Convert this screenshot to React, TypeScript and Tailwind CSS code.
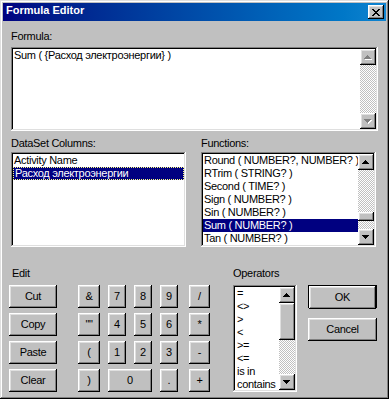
import React from "react";

// Win98 style bevels
const raised =
  "shadow-[inset_-1px_-1px_#000,inset_1px_1px_#fff,inset_-2px_-2px_#808080,inset_2px_2px_#dfdfdf]";
const sunken =
  "shadow-[inset_-1px_-1px_#fff,inset_1px_1px_#808080,inset_-2px_-2px_#dfdfdf,inset_2px_2px_#000]";
const checker =
  "bg-[repeating-conic-gradient(#c0c0c0_0%_25%,#ffffff_0%_50%)] bg-[length:2px_2px]";

function Arrow({ dir, disabled }: { dir: "up" | "down"; disabled?: boolean }) {
  const pts = dir === "up" ? "3.5,0 7,4 0,4" : "0,0 7,0 3.5,4";
  return (
    <div className={`w-[16px] h-[16px] shrink-0 bg-[#c0c0c0] flex items-center justify-center ${raised}`}>
      <svg width="8" height="5" viewBox="0 0 8 5" shapeRendering="crispEdges">
        {disabled && <polygon points={pts} fill="#fff" transform="translate(1,1)" />}
        <polygon points={pts} fill={disabled ? "#808080" : "#000"} />
      </svg>
    </div>
  );
}

function ScrollBar({ before, thumb, disabled }: { before?: number; thumb?: number; disabled?: boolean }) {
  return (
    <div className="w-[16px] shrink-0 flex flex-col">
      <Arrow dir="up" disabled={disabled} />
      {thumb ? (
        <>
          <div className={checker} style={{ height: before }} />
          <div className={`bg-[#c0c0c0] ${raised}`} style={{ height: thumb }} />
          <div className={`flex-1 ${checker}`} />
        </>
      ) : (
        <div className={`flex-1 ${checker}`} />
      )}
      <Arrow dir="down" disabled={disabled} />
    </div>
  );
}

function Btn({ label, className = "" }: { label: string; className?: string }) {
  return (
    <div className={`h-[23px] bg-[#c0c0c0] flex items-center justify-center ${raised} ${className}`}>
      {label}
    </div>
  );
}

const functions = [
  "Round ( NUMBER?, NUMBER? )",
  "RTrim ( STRING? )",
  "Second ( TIME? )",
  "Sign ( NUMBER? )",
  "Sin ( NUMBER? )",
  "Sum ( NUMBER? )",
  "Tan ( NUMBER? )",
];

const operators = ["=", "<>", ">", "<", ">=", "<=", "is in", "contains"];

export default function App() {
  return (
    <div className="w-[389px] h-[399px] bg-[#c0c0c0] p-[3px] flex flex-col text-black text-[11px] leading-[13px] tracking-[-0.3px] font-['Liberation_Sans',Arial,sans-serif] shadow-[inset_-1px_-1px_#000,inset_1px_1px_#dfdfdf,inset_-2px_-2px_#808080,inset_2px_2px_#fff] overflow-hidden">
      {/* Title bar */}
      <div className="h-[18px] shrink-0 flex items-start bg-gradient-to-r from-[#000080] to-[#1084d0] pl-[3px] pr-[2px]">
        <span className="mt-[1px] text-white font-bold tracking-normal">Formula Editor</span>
        <div className={`ml-auto mt-[2px] w-[16px] h-[14px] bg-[#c0c0c0] flex items-center justify-center ${raised}`}>
          <svg width="8" height="7" viewBox="0 0 8 7" shapeRendering="crispEdges">
            <path d="M0 0h2v1h1v1h2V1h1V0h2v1H7v1H6v1H5v1h1v1h1v1h1v1H6V6H5V5H3v1H2v1H0V6h1V5h1V4h1V3H2V2H1V1H0z" fill="#000" />
          </svg>
        </div>
      </div>

      <div className="flex flex-col px-[8px]">
        <div className="mt-[9px] h-[13px]">Formula:</div>
        <div className={`mt-[4px] h-[84px] bg-white p-[2px] flex ${sunken}`}>
          <div className="flex-1 pl-[1px]">Sum ( {"{"}Расход электроэнергии{"}"} )</div>
          <ScrollBar disabled />
        </div>

        <div className="mt-[6px] grid grid-cols-[175px_175px] gap-x-[15px]">
          <div className="h-[13px]">DataSet Columns:</div>
          <div className="h-[13px]">Functions:</div>
          <div className={`mt-[2px] h-[95px] bg-white p-[2px] ${sunken}`}>
            <div className="h-[13px] pl-[1px]">Activity Name</div>
            <div className="h-[13px] pl-[1px] bg-[#000080] text-white border border-dotted border-[#ffff7f] leading-[11px]">
              Расход электроэнергии
            </div>
          </div>
          <div className={`mt-[2px] h-[95px] bg-white p-[2px] flex ${sunken}`}>
            <div className="flex-1 overflow-hidden">
              {functions.map((f, i) => (
                <div
                  key={f}
                  className={`h-[13px] pl-[1px] whitespace-nowrap ${i === 5 ? "bg-[#000080] text-white" : ""}`}
                >
                  {f}
                </div>
              ))}
            </div>
            <ScrollBar before={42} thumb={9} />
          </div>
        </div>

        {/* Bottom section */}
        <div className="mt-[20px] -ml-[2px] flex items-start">
          <div className="w-[48px] flex flex-col">
            <div className="h-[13px] pl-[3px]">Edit</div>
            <div className="mt-[5px] flex flex-col gap-[5px]">
              <Btn label="Cut" />
              <Btn label="Copy" />
              <Btn label="Paste" />
              <Btn label="Clear" />
            </div>
          </div>

          <div className="ml-[21px] mt-[18px] grid grid-cols-[22px_18px_18px_18px_24px] gap-x-[8px] gap-y-[5px]">
            <Btn label="&" />
            <Btn label="7" />
            <Btn label="8" />
            <Btn label="9" />
            <Btn label="/" className="w-[21px] justify-self-end" />
            <Btn label={'""'} />
            <Btn label="4" />
            <Btn label="5" />
            <Btn label="6" />
            <Btn label="*" className="w-[21px] justify-self-end" />
            <Btn label="(" />
            <Btn label="1" />
            <Btn label="2" />
            <Btn label="3" />
            <Btn label="-" className="w-[21px] justify-self-end" />
            <Btn label=")" />
            <Btn label="0" className="col-span-2" />
            <Btn label="." />
            <Btn label="+" className="w-[21px] justify-self-end" />
          </div>

          <div className="ml-[23px] w-[64px] flex flex-col">
            <div className="h-[13px]">Operators</div>
            <div className={`mt-[5px] h-[107px] bg-white p-[2px] flex ${sunken}`}>
              <div className="flex-1 overflow-hidden">
                {operators.map((o) => (
                  <div key={o} className="h-[13px] pl-[2px] whitespace-nowrap">
                    {o}
                  </div>
                ))}
              </div>
              <ScrollBar before={0} thumb={37} />
            </div>
          </div>

          <div className="ml-[11px] mt-[18px] w-[69px] flex flex-col">
            <div className="h-[23px] border border-black">
              <Btn label="OK" className="h-[21px]" />
            </div>
            <Btn label="Cancel" className="mt-[10px] h-[22px]" />
          </div>
        </div>
      </div>
    </div>
  );
}
